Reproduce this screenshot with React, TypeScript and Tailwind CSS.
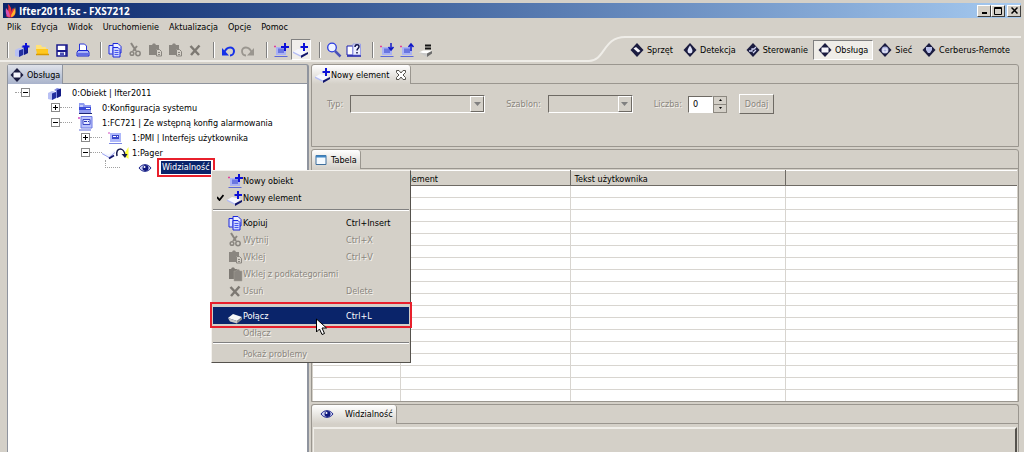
import { useState } from "react";
import type { ReactNode } from "react";
import clsx from "clsx";

const disabledText = "text-[#8a867e] [text-shadow:1px_1px_0_#f4f2ee]";

function Svg({ children, w = 16 }: { children: ReactNode; w?: number }) {
  return (
    <svg width={w} height="16" viewBox={`0 0 ${w} 16`} fill="none" className="shrink-0" aria-hidden="true">
      {children}
    </svg>
  );
}

/* ---------- ICONS ---------- */

function FlameIcon() {
  return (
    <svg width="12" height="14" viewBox="0 0 12 14" className="shrink-0" aria-hidden="true">
      <path d="M3 0c3 3 4 5 3 8l2-4c3 3 3 6 1 8-2 2-6 2-8 0 2-3 3-7 2-12z" fill="#e8303a" />
      <path d="M1 4c2 2 4 5 4 9-3 0-5-3-4-9z" fill="#d84fb0" />
      <path d="M10 3c1 4 1 9-4 10 0-4 3-5 4-10z" fill="#ffb52e" />
    </svg>
  );
}

function CubesIcon({ plus = false }: { plus?: boolean }) {
  return (
    <Svg>
      <path d="M1 8l4-2 4 1v6l-4 2-4-1z" fill="#b8c0f4" />
      <path d="M5 8.500l4-1.500v6l-4 2z" fill="#2430a0" />
      <path d="M7 5l3-2 4 1v7l-4 2-1-.5V6z" fill="#7d88e0" />
      <path d="M10 5l4-1.500V11l-4 2z" fill="#141c86" />
      {plus && <path d="M12 1v7M8.500 4.500h7" stroke="#0c10d8" strokeWidth="2" />}
    </Svg>
  );
}

function FolderIcon() {
  return (
    <Svg>
      <path d="M2 3h5l1 2h4v3H2z" fill="#ffe27a" />
      <path d="M2 7h12v5H3z" fill="#ffc81e" />
      <path d="M2 12.500h13" stroke="#d89a00" strokeWidth="1.500" />
    </Svg>
  );
}

function SaveIcon() {
  return (
    <Svg>
      <path d="M3 3h10v11H3z" fill="#fff" stroke="#1a1a8c" strokeWidth="1.500" />
      <path d="M3 8h10v2H3z" fill="#1a1a8c" />
      <path d="M6 10.500h4V14H6z" fill="#4c50b4" />
      <path d="M12 3v11" stroke="#1a1a8c" strokeWidth="1.500" />
    </Svg>
  );
}

function PrintIcon() {
  return (
    <Svg>
      <path d="M5.500 2h5l2 2v5h-7z" fill="#fff" stroke="#2a36d8" />
      <path d="M4 8.500h10l1 2v3.500H3v-3.500z" fill="#aab4f8" stroke="#1824d0" />
      <path d="M4 12h10" stroke="#1824d0" />
    </Svg>
  );
}

function CopyIcon() {
  return (
    <Svg>
      <path d="M2 3.500h6l2 2V12H2z" fill="#dfe4ff" stroke="#1c28dc" />
      <path d="M6 1.500h5l3 3V11H6z" fill="#eef0ff" stroke="#1c28dc" />
      <path d="M6 5.500h5l2 2V15H6z" fill="#cfd6ff" stroke="#1c28dc" />
      <path d="M7.500 8.500h4M7.500 10.500h4M7.500 12.500h4" stroke="#4a58ee" />
    </Svg>
  );
}

function CutIcon() {
  return (
    <Svg>
      <path d="M4 1l5 8M10 4L6 9" stroke="#8a8680" strokeWidth="2" />
      <circle cx="5" cy="11.500" r="1.800" stroke="#8a8680" strokeWidth="1.500" />
      <circle cx="11" cy="11.500" r="2.200" stroke="#8a8680" strokeWidth="1.500" />
    </Svg>
  );
}

function PasteIcon() {
  return (
    <Svg>
      <path d="M2 3h3l1-1.500h2L9 3h3v4H9v6H2z" fill="#8a8680" />
      <path d="M9.500 7.500h3l2 2V14h-5z" fill="#d4d0c8" stroke="#8a8680" />
      <path d="M11 10.500h2M11 12.500h2" stroke="#8a8680" />
    </Svg>
  );
}

function PasteAllIcon() {
  return (
    <Svg>
      <path d="M2 3h2l1-1.500h2L8 3h2v10H2z" fill="#7d7973" />
      <path d="M7 5h2l1-1.500h2L13 5h2v10H7z" fill="#8a8680" stroke="#a6a29a" strokeWidth=".5" />
    </Svg>
  );
}

function DeleteIcon() {
  return (
    <Svg>
      <path d="M3.500 4l8.500 9M12.500 3.500L4 13" stroke="#7d7973" strokeWidth="2.500" />
    </Svg>
  );
}

function UndoIcon() {
  return (
    <Svg>
      <path d="M4 11c3-8 10-6 10-2 0 3-2 4.500-4 4.500" stroke="#1430e8" strokeWidth="2" />
      <path d="M2 6v7.500h7z" fill="#1430e8" />
    </Svg>
  );
}

function RedoIcon() {
  return (
    <Svg>
      <path d="M12 11C9 3 2 5 2 9c0 3 2 4.500 4 4.500" stroke="#9a968f" strokeWidth="1.800" />
      <path d="M14 6v7.500H7z" fill="#9a968f" />
    </Svg>
  );
}

function PanelIcon({ mark }: { mark?: "plus" | "down" | "up" }) {
  return (
    <Svg>
      <path d="M1 4.500h2" stroke="#e0409c" strokeWidth="1.500" />
      <path d="M3 5h10v8H3z" fill="#aab2f4" />
      <path d="M5 6.500h6V11H5z" fill="#6a76e0" />
      <path d="M1.500 14.500h13" stroke="#5c68d8" />
      {mark === "plus" && <path d="M12 1v8M8 5h8" stroke="#0c10d8" strokeWidth="2" />}
      {mark === "down" && <path d="M12 1v6M9.500 5l2.500 3 2.500-3" stroke="#1018c8" strokeWidth="1.500" />}
      {mark === "up" && <path d="M12 9V2M9.500 5L12 2l2.500 3" stroke="#1018c8" strokeWidth="1.500" />}
    </Svg>
  );
}

function ElementIcon() {
  return (
    <Svg>
      <path d="M0 10l5-3 9 2-6 5z" fill="#f6f7ff" />
      <path d="M0 9.500l8 4v1.500l-8-4z" fill="#b4bcf4" />
      <path d="M8 13.500L15 10v2l-7 4z" fill="#10146c" />
      <path d="M11 1v8M7.500 5h7.500" stroke="#0c10d8" strokeWidth="2" />
    </Svg>
  );
}

function SearchIcon() {
  return (
    <Svg>
      <circle cx="6" cy="5.500" r="4.300" fill="#f0f4ff" stroke="#2a3ce0" strokeWidth="1.300" />
      <path d="M9 9l5.500 5.500" stroke="#4a52b8" strokeWidth="2.500" />
    </Svg>
  );
}

function HelpIcon() {
  return (
    <Svg>
      <path d="M1 4h6v9H1z" fill="#fff" stroke="#1c20b0" />
      <path d="M7 2h7.500v11H7z" fill="#eef0ff" stroke="#9aa0e8" />
      <path d="M1 14h14" stroke="#1c20b0" strokeWidth="1.500" />
      <path d="M9 5c0-3 4-3 4-.5C13 6.500 11 6.500 11 8.500M11 10v1.500" stroke="#10124c" strokeWidth="1.500" />
    </Svg>
  );
}

function LinkIcon() {
  return (
    <Svg>
      <path d="M6 3.500h6M6 6.500h6" stroke="#141414" strokeWidth="1.800" />
      <path d="M0 10.500l4-2h9l-5 3z" fill="#fff" />
      <path d="M0 10.500l8 1v3.500z" fill="#c8c8c8" />
      <path d="M8 11.500L13 9v2.500L8 15z" fill="#6c6c6c" />
    </Svg>
  );
}

function PlateIcon() {
  return (
    <Svg>
      <path d="M1 10l5-4 9 3-5 4z" fill="#f8f8f8" />
      <path d="M1 10l9 3v2.500l-7-2z" fill="#c6c6c6" />
      <path d="M10 13l5-4v2.500l-5 4z" fill="#8e8e8e" />
    </Svg>
  );
}

function EyeIcon() {
  return (
    <Svg>
      <path d="M2 8c3-4.500 9-4.500 12 0-3 4.500-9 4.500-12 0z" fill="#c9cdf2" stroke="#20288c" />
      <circle cx="8.500" cy="8" r="3" fill="#10187c" />
      <circle cx="7.500" cy="7" r="1" fill="#fff" />
    </Svg>
  );
}

function SystemIcon() {
  return (
    <Svg>
      <path d="M2 3h5l1 2h6v8H2z" fill="#8f9bf0" />
      <path d="M2 7h12v3H2z" fill="#3c4cd8" />
      <path d="M3 6h3M9 8.500h4" stroke="#fff" />
      <path d="M2 13.500h13" stroke="#1c2474" />
    </Svg>
  );
}

function StationIcon() {
  return (
    <Svg>
      <path d="M4 1.500h11V13H4z" fill="#b9c2fa" stroke="#6c78e4" />
      <path d="M1 3h2" stroke="#d04cc0" strokeWidth="1.500" />
      <path d="M6 4.500h7v5H6z" fill="#e4e8ff" stroke="#3a46c4" />
      <path d="M7 6.500h3M11 6.500h1" stroke="#2430b0" />
      <path d="M2 15h12" stroke="#5c68d8" />
    </Svg>
  );
}

function PmiIcon() {
  return (
    <Svg>
      <path d="M3 3h11v9H3z" fill="#aeb8fa" />
      <path d="M5 5h7v4H5z" fill="#3a48cc" />
      <path d="M6 6.500h3M10 6.500h1" stroke="#fff" />
      <path d="M1 3h2" stroke="#d04cc0" />
      <path d="M2 13.500h13" stroke="#7c88e4" />
    </Svg>
  );
}

function PagerIcon() {
  return (
    <Svg w={27}>
      <path d="M1 8l6 1 6-4v2l-5 6-7-3z" fill="#f4f6ff" />
      <path d="M0 8.500l7 4 6-5" stroke="#9ca4f0" />
      <path d="M7 13.500l5-3" stroke="#10146c" strokeWidth="1.800" />
      <path d="M26.500 2v12l-5-4z" fill="#ffff38" />
      <path d="M15 11c-2-9 7-9 8-1" stroke="#14184c" strokeWidth="1.500" />
      <path d="M19.500 9h6L23 13z" fill="#14184c" />
    </Svg>
  );
}

function DiamondIcon({ kind }: { kind: string }) {
  return (
    <Svg w={14}>
      <path d="M7 1l6.500 7L7 15 .5 8z" fill="#1b1c40" />
      {kind === "hardware" && <path d="M3.500 6.500L6 5l4.500 4L8 10.500z" fill="#f4f4fa" />}
      {kind === "detection" && <path d="M7 3.500c2 3 2.500 4.500 2.500 5.500a2.500 2.500 0 01-5 0c0-1 .5-2.500 2.500-5.500z" fill="#dfe2f8" />}
      {kind === "control" && <path d="M3 9h3V7h2l2-2M7 11l3-3" stroke="#d0d4f4" strokeWidth="1.300" />}
      {kind === "operation" && <path d="M3.500 5.500h7v5h-7z" fill="#f4f4fa" />}
      {kind === "network" && (
        <>
          <circle cx="7" cy="8" r="3.500" fill="#aab0dc" />
          <path d="M5 7h4v3H5z" stroke="#f4f4fa" />
        </>
      )}
      {kind === "remote" && <path d="M4 5h6v3L8 11H6L4 8z" fill="#b9bfe8" />}
    </Svg>
  );
}

function TableIcon() {
  return (
    <Svg w={12}>
      <path d="M1 3.500h10v9H1z" fill="#f4faff" stroke="#3f6f9c" />
      <path d="M1 4.500h10" stroke="#3f86c4" strokeWidth="2" />
    </Svg>
  );
}

/* ---------- TOOLBAR ---------- */

const menus = ["Plik", "Edycja", "Widok", "Uruchomienie", "Aktualizacja", "Opcje", "Pomoc"];

const toolGroups = [
  [
    { title: "Nowy", icon: <CubesIcon plus /> },
    { title: "Otwórz", icon: <FolderIcon /> },
    { title: "Zapisz", icon: <SaveIcon /> },
    { title: "Drukuj", icon: <PrintIcon /> },
  ],
  [
    { title: "Kopiuj", icon: <CopyIcon /> },
    { title: "Wytnij", icon: <CutIcon /> },
    { title: "Wklej", icon: <PasteIcon /> },
    { title: "Wklej z podkategoriami", icon: <PasteIcon /> },
    { title: "Usuń", icon: <DeleteIcon /> },
  ],
  [
    { title: "Cofnij", icon: <UndoIcon /> },
    { title: "Ponów", icon: <RedoIcon /> },
  ],
  [
    { title: "Nowy obiekt", icon: <PanelIcon mark="plus" /> },
    { title: "Nowy element", icon: <ElementIcon />, pressed: true },
  ],
  [
    { title: "Szukaj", icon: <SearchIcon /> },
    { title: "Pomoc", icon: <HelpIcon /> },
  ],
  [
    { title: "Pobierz", icon: <PanelIcon mark="down" /> },
    { title: "Wyślij", icon: <PanelIcon mark="up" /> },
    { title: "Połącz", icon: <LinkIcon /> },
  ],
];

const perspectives = [
  { label: "Sprzęt", kind: "hardware" },
  { label: "Detekcja", kind: "detection" },
  { label: "Sterowanie", kind: "control" },
  { label: "Obsługa", kind: "operation" },
  { label: "Sieć", kind: "network" },
  { label: "Cerberus-Remote", kind: "remote" },
];

function Toolbar() {
  const [active, setActive] = useState("Obsługa");

  return (
    <div className="flex h-[26px] pr-[3px]">
      <div className="flex min-w-0 flex-1 items-end border-b-2 border-[#efede8] pl-[7px]">
        {toolGroups.map((group, i) => (
          <div key={i} className={clsx("flex items-center", i > 0 && "pl-2")}>
            <span className="mr-[3px] h-4 w-[2px] border-l border-[#808080] bg-white" />
            {group.map((tool) => (
              <button
                key={tool.title}
                title={tool.title}
                className={clsx(
                  "flex h-[21px] w-5 items-center justify-center",
                  "pressed" in tool && "border border-[#fff] border-t-[#808080] border-l-[#808080] bg-[#f0eeea]"
                )}
              >
                {tool.icon}
              </button>
            ))}
          </div>
        ))}
      </div>
      <svg width="36" height="26" viewBox="0 0 36 26" fill="none" className="shrink-0" aria-hidden="true">
        <path d="M0 25c16 0 14-24 36-24" stroke="#efede8" strokeWidth="2" />
      </svg>
      <nav className="flex items-center border-t-2 border-[#efede8] pr-[6px]">
        {perspectives.map((p) => (
          <button
            key={p.label}
            onClick={() => setActive(p.label)}
            className={clsx(
              "flex h-5 items-center gap-[3px] border px-1 whitespace-nowrap",
              active === p.label
                ? "border-white border-t-[#808080] border-l-[#808080] bg-[#efede8]"
                : "border-transparent"
            )}
          >
            <DiamondIcon kind={p.kind} />
            {p.label}
          </button>
        ))}
      </nav>
    </div>
  );
}

/* ---------- TREE ---------- */

const tree = [
  { level: 0, sign: "-", label: "0:Obiekt | Ifter2011", icon: <CubesIcon /> },
  { level: 1, sign: "+", label: "0:Konfiguracja systemu", icon: <SystemIcon /> },
  { level: 1, sign: "-", label: "1:FC721 | Ze wstępną konfig alarmowania", icon: <StationIcon /> },
  { level: 2, sign: "+", label: "1:PMI | Interfejs użytkownika", icon: <PmiIcon /> },
  { level: 2, sign: "-", label: "1:Pager", icon: <PagerIcon /> },
  { level: 3, sign: "", label: "Widzialność", icon: <EyeIcon />, selected: true },
];

const indents = ["pl-[7px]", "pl-[37px]", "pl-[67px]", "pl-[97px]"];

function TreeView() {
  return (
    <ul className="flex-1 bg-white pt-[1px]">
      {tree.map((node) => (
        <li key={node.label} className={clsx("flex h-[15px] items-center whitespace-nowrap", indents[node.level])}>
          {node.sign ? (
            <>
              <span className={clsx("w-[6px]", node.level === 0 && "border-t border-dotted border-[#a0a0a0]")} />
              <button className="flex h-[9px] w-[9px] items-center justify-center border border-[#8a8a8a]">
                <svg width="5" height="5" viewBox="0 0 5 5" stroke="#000" aria-hidden="true">
                  <path d={node.sign === "+" ? "M0 2.500h5M2.500 0v5" : "M0 2.500h5"} />
                </svg>
              </button>
              <span className={clsx("w-3", node.level > 0 && "border-t border-dotted border-[#a0a0a0]")} />
            </>
          ) : (
            <span className="mr-3 mb-[7px] h-2 w-[15px] border-b border-l border-dotted border-[#a0a0a0]" />
          )}
          <span className="flex w-[26px] justify-center">{node.icon}</span>
          {node.selected ? (
            <span className="relative ml-[3px] bg-[#0a246a] px-[1px] leading-[13px] text-white">
              {node.label}
              <span className="absolute -inset-x-1 -inset-y-[3px] border-2 border-[#e8202c]" />
            </span>
          ) : (
            <span className="ml-1">{node.label}</span>
          )}
        </li>
      ))}
    </ul>
  );
}

/* ---------- FORM ---------- */

const sunken = "border border-[#fff] border-t-[#6e6a64] border-l-[#6e6a64]";
const raised = "border border-[#6e6a64] border-t-white border-l-white";

function DisabledSelect({ id, label, width }: { id: string; label: string; width: string }) {
  return (
    <div className="flex items-center gap-[7px]">
      <label htmlFor={id} className={disabledText}>
        {label}
      </label>
      <div className={clsx("grid h-[18px]", sunken, width)}>
        <select id={id} disabled className="col-start-1 row-start-1 appearance-none bg-transparent" />
        <span
          className={clsx(
            "pointer-events-none col-start-1 row-start-1 flex w-[14px] items-center justify-center justify-self-end",
            raised
          )}
        >
          <svg width="7" height="4" viewBox="0 0 7 4" aria-hidden="true">
            <path d="M0 0h7L3.500 4z" fill="#808080" />
          </svg>
        </span>
      </div>
    </div>
  );
}

function NewElementForm() {
  const [count, setCount] = useState(0);

  return (
    <form className="flex items-center gap-[21px] pt-[10px] pl-[15px]" onSubmit={(e) => e.preventDefault()}>
      <DisabledSelect id="type" label="Typ:" width="w-[135px]" />
      <DisabledSelect id="template" label="Szablon:" width="w-[85px]" />
      <div className="flex items-center gap-[6px]">
        <label htmlFor="count" className={disabledText}>
          Liczba:
        </label>
        <div className="flex items-center">
          <input
            id="count"
            value={count}
            onChange={(e) => setCount(Number(e.target.value) || 0)}
            className={clsx("h-[17px] w-[25px] bg-white px-1", sunken)}
          />
          <span className="flex flex-col">
            <button
              type="button"
              aria-label="Więcej"
              onClick={() => setCount(count + 1)}
              className="flex h-[9px] w-[14px] items-center justify-center border border-[#8c8880]"
            >
              <svg width="3" height="2" viewBox="0 0 3 2" aria-hidden="true">
                <path d="M0 2L1.500 0 3 2z" />
              </svg>
            </button>
            <button
              type="button"
              aria-label="Mniej"
              onClick={() => setCount(Math.max(0, count - 1))}
              className="flex h-[8px] w-[14px] items-center justify-center border border-t-0 border-[#8c8880]"
            >
              <svg width="3" height="2" viewBox="0 0 3 2" aria-hidden="true">
                <path d="M0 0h3L1.500 2z" />
              </svg>
            </button>
          </span>
        </div>
        <button disabled className={clsx("ml-[6px] h-5 w-[35px]", raised, disabledText)}>
          Dodaj
        </button>
      </div>
    </form>
  );
}

/* ---------- PANELS ---------- */

function Panel({ tab, className, children }: { tab: ReactNode; className?: string; children: ReactNode }) {
  return (
    <section className={clsx("flex flex-col rounded-t-[3px] border border-[#9a968f]", className)}>
      <div className="flex h-[19px] shrink-0">
        <h2 className="flex items-center rounded-t-[3px] border-r border-[#9a968f] bg-linear-to-b from-white to-[#d4d0c8] px-[3px] whitespace-nowrap">
          {tab}
        </h2>
        <div className="flex-1 border-b border-[#9a968f]" />
      </div>
      {children}
    </section>
  );
}

const columns = ["", "Element", "Tekst użytkownika", ""];

function ElementsTable() {
  return (
    <table className="w-full table-fixed border-collapse bg-white">
      <colgroup>
        <col className="w-[87px]" />
        <col className="w-[170px]" />
        <col className="w-[215px]" />
        <col />
      </colgroup>
      <thead>
        <tr className="h-[15px] bg-[#d4d0c8]">
          {columns.map((name, i) => (
            <th
              key={i}
              className="border-t border-r border-b border-t-white border-r-[#6e6a64] border-b-[#6e6a64] px-1 pt-[2px] pb-0 text-left font-normal last:border-r-0"
            >
              {name}
            </th>
          ))}
        </tr>
      </thead>
      <tbody>
        {Array.from({ length: 18 }, (_, row) => (
          <tr key={row} className="h-3 border-b border-[#d8d5d0] last:h-[11px] last:border-b-0">
            {columns.map((_, i) => (
              <td key={i} className="border-r border-[#d8d5d0] p-0 last:border-r-0" />
            ))}
          </tr>
        ))}
      </tbody>
    </table>
  );
}

/* ---------- CONTEXT MENU ---------- */

function MenuItem({
  icon,
  label,
  shortcut,
  checked,
  disabled,
  active,
}: {
  icon?: ReactNode;
  label: string;
  shortcut?: string;
  checked?: boolean;
  disabled?: boolean;
  active?: boolean;
}) {
  return (
    <button
      role="menuitem"
      disabled={disabled}
      className={clsx(
        "relative flex h-[17px] w-full items-center text-left whitespace-nowrap",
        disabled && disabledText,
        active && "bg-[#0a246a] text-white"
      )}
    >
      <span className="flex w-[14px] justify-center">
        {checked && (
          <svg width="7" height="7" viewBox="0 0 7 7" fill="none" aria-hidden="true">
            <path d="M0 3l2.500 3L6.500 1" stroke="#000" strokeWidth="1.800" />
          </svg>
        )}
      </span>
      <span className="flex w-4 justify-center">{icon}</span>
      <span className="w-[103px]">{label}</span>
      <span>{shortcut}</span>
      {active && <span className="absolute -inset-x-[3px] -top-[5px] -bottom-1 border-2 border-[#e8202c]" />}
    </button>
  );
}

function Separator({ className }: { className: string }) {
  return (
    <div className={clsx("flex items-center", className)}>
      <span className="h-[2px] flex-1 border-t border-[#808080] bg-white" />
    </div>
  );
}

function ContextMenu() {
  return (
    <div
      role="menu"
      className="absolute top-[170px] left-[211px] w-[200px] border border-[#55524d] border-t-[#f4f2ee] border-l-[#f4f2ee] bg-[#d4d0c8] px-[1px] pt-[1px]"
    >
      <MenuItem icon={<PanelIcon mark="plus" />} label="Nowy obiekt" />
      <MenuItem icon={<ElementIcon />} label="Nowy element" checked />
      <Separator className="h-2" />
      <MenuItem icon={<CopyIcon />} label="Kopiuj" shortcut="Ctrl+Insert" />
      <MenuItem icon={<CutIcon />} label="Wytnij" shortcut="Ctrl+X" disabled />
      <MenuItem icon={<PasteIcon />} label="Wklej" shortcut="Ctrl+V" disabled />
      <MenuItem icon={<PasteAllIcon />} label="Wklej z podkategoriami" disabled />
      <MenuItem icon={<DeleteIcon />} label="Usuń" shortcut="Delete" disabled />
      <div className="h-2" />
      <div className="relative z-10">
        <MenuItem icon={<PlateIcon />} label="Połącz" shortcut="Ctrl+L" active />
      </div>
      <MenuItem label="Odłącz" disabled />
      <Separator className="h-1" />
      <MenuItem label="Pokaż problemy" disabled />
      <svg
        width="12"
        height="18"
        viewBox="0 0 12 18"
        className="absolute top-[147px] left-[104px] z-20"
        aria-hidden="true"
      >
        <path d="M.5 1v13l3-3 2.500 5.500 2.500-1L6 10h4.500z" fill="#fff" stroke="#000" />
      </svg>
    </div>
  );
}

/* ---------- WINDOW ---------- */

const captionButton =
  "flex h-3 w-[14px] items-center justify-center border border-[#404040] border-t-white border-l-white bg-[#d4d0c8]";

function TitleBar() {
  return (
    <header className="mx-[3px] mt-[3px] flex h-[15px] items-center bg-linear-to-r from-[#0a246a] to-[#a6caf0] pl-[2px]">
      <FlameIcon />
      <h1 className="ml-[2px] flex-1 font-['Open_Sans','Noto_Sans',sans-serif] text-[10px] font-bold text-white">
        Ifter2011.fsc - FXS7212
      </h1>
      <button aria-label="Minimalizuj" className={captionButton}>
        <svg width="7" height="7" viewBox="0 0 7 7" stroke="#000" aria-hidden="true">
          <path d="M1 6h5" strokeWidth="2" />
        </svg>
      </button>
      <button aria-label="Maksymalizuj" className={captionButton}>
        <svg width="8" height="8" viewBox="0 0 8 8" fill="none" stroke="#000" aria-hidden="true">
          <path d="M.5 .5h7v7h-7zM0 1.500h8" />
        </svg>
      </button>
      <button aria-label="Zamknij" className={clsx("ml-[2px]", captionButton)}>
        <svg width="7" height="7" viewBox="0 0 7 7" stroke="#000" strokeWidth="1.500" aria-hidden="true">
          <path d="M.5 .5l6 6M6.500 .5l-6 6" />
        </svg>
      </button>
    </header>
  );
}

function App() {
  return (
    <div className="relative flex h-screen flex-col overflow-hidden bg-[#d4d0c8] font-['DejaVu_Sans_Condensed','Open_Sans',sans-serif] text-[9px] leading-3 text-black">
      <TitleBar />

      <nav className="flex h-[18px] items-center pl-[2px]">
        {menus.map((name) => (
          <button key={name} className="px-[5px]">
            {name}
          </button>
        ))}
      </nav>

      <Toolbar />

      <main className="flex min-h-0 flex-1 gap-[2px] pt-[2px] pr-[5px] pl-[7px]">
        {/* Drzewo obiektów */}
        <section className="flex w-[302px] shrink-0 flex-col rounded-t-[3px] border border-r-2 border-b-0 border-[#8f949e]">
          <div className="flex h-[19px] shrink-0">
            <h2 className="flex items-center gap-[3px] border-r border-[#8f949e] bg-linear-to-b from-[#dfe2ea] to-[#a9b3cb] px-[2px] whitespace-nowrap">
              <DiamondIcon kind="operation" />
              Obsługa
            </h2>
            <div className="flex-1 border-b border-[#8f949e]" />
          </div>
          <TreeView />
        </section>

        <div className="flex min-w-0 flex-1 flex-col gap-[2px]">
          <Panel
            className="h-[83px] shrink-0"
            tab={
              <>
                <ElementIcon />
                Nowy element
                <button aria-label="Zamknij kartę" className="mr-[1px] ml-[7px]">
                  <svg width="10" height="10" viewBox="0 0 10 10" fill="#fff" stroke="#55524d" aria-hidden="true">
                    <path d="M.5 .5h2.500L5 3 7 .5h2.500v2L7 5l2.500 2.500v2H7L5 7 3 9.500H.5v-2L3 5 .5 2.500z" />
                  </svg>
                </button>
              </>
            }
          >
            <NewElementForm />
          </Panel>

          <Panel
            className="shrink-0"
            tab={
              <>
                <TableIcon />
                <span className="ml-1">Tabela</span>
              </>
            }
          >
            <div className="px-[1px] pt-[1px]">
              <ElementsTable />
            </div>
          </Panel>

          <Panel
            className="flex-1 border-b-0"
            tab={
              <span className="flex items-center gap-[10px] pl-1">
                <EyeIcon />
                Widzialność
              </span>
            }
          >
            <div className="mt-[3px] mr-[1px] ml-[1px] flex-1 border-t-2 border-r-2 border-l border-t-[#f0eee9] border-r-[#55524d] border-l-[#f0eee9]" />
          </Panel>
        </div>
      </main>

      <ContextMenu />
    </div>
  );
}

export default App;
